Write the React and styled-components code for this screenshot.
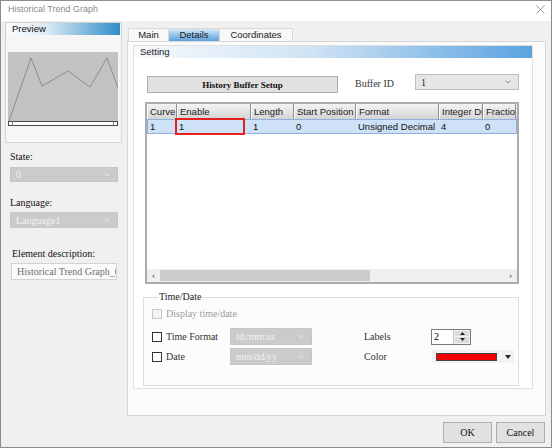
import React from 'react'
import styled, { createGlobalStyle } from 'styled-components'

const SANS = `"Liberation Sans", Arial, sans-serif`
const SERIF = `"Liberation Serif", "Times New Roman", serif`

const GlobalStyle = createGlobalStyle`
  html, body { margin: 0; padding: 0; background: #fff; }
  * { box-sizing: border-box; }
`

const Window = styled.div`
  width: 552px;
  height: 448px;
  display: flex;
  flex-direction: column;
  border: 1px solid #8c8c8c;
  background: #f0f0f0;
  font-family: ${SERIF};
  overflow: hidden;
`

const TitleBar = styled.div`
  height: 20px;
  flex: none;
  display: flex;
  align-items: flex-start;
  justify-content: space-between;
  padding: 3px 6px 0 7px;
  background: #fff;
  font-family: ${SANS};
  font-size: 9px;
  line-height: 10px;
  color: #8a8a8a;
`

const Body = styled.div`
  flex: 1;
  display: flex;
  gap: 3px;
  padding: 1px 5px 0 3px;
  min-height: 0;
`

const LeftCol = styled.div`
  width: 120px;
  flex: none;
  display: flex;
  flex-direction: column;
`

const PreviewBox = styled.div`
  width: 117px;
  height: 121px;
  margin-left: 1px;
  border: 1px solid #d4d4d4;
  background: #f6f6f6;
  display: flex;
  flex-direction: column;
`

const PreviewHead = styled.div`
  height: 12px;
  margin: 0 1px;
  padding-left: 5px;
  background: linear-gradient(to right, #fbfcfd 0%, #dcebf5 35%, #2f8cc8 100%);
  font-family: ${SANS};
  font-size: 9.5px;
  line-height: 12px;
  color: #111;
`

const Graph = styled.div`
  width: 110px;
  height: 69px;
  margin: 17px 0 0 2px;
  background: #c2c2c0;
  svg { display: block; }
`

const GraphScroll = styled.div`
  width: 110px;
  height: 5px;
  margin-left: 2px;
  border: 1px solid #4a4a4a;
  background: #fff;
  display: flex;
  justify-content: space-between;
  span {
    width: 4px;
    border-right: 1px solid #888;
    &:last-child { border-right: none; border-left: 1px solid #888; }
  }
`

const SideLabel = styled.div`
  font-size: 10px;
  line-height: 12px;
  color: #111;
  margin: ${p => p.$top}px 0 0 ${p => p.$left || 6}px;
`

const Combo = styled.div`
  width: ${p => p.$w}px;
  height: ${p => p.$h || 16}px;
  margin: ${p => p.$m || '0'};
  flex: none;
  display: flex;
  align-items: center;
  justify-content: space-between;
  padding: 0 7px 0 5px;
  border: 1px solid ${p => (p.$disabled ? '#c6c6c6' : '#bdbdbd')};
  background: ${p => (p.$disabled ? '#cbcbcb' : '#e6e6e6')};
  color: ${p => (p.$disabled ? '#f2f2f2' : '#222')};
  font-family: ${SERIF};
  font-size: 10px;
  svg { flex: none; }
`

const TextField = styled.div`
  width: 106px;
  height: 17px;
  margin: 3px 0 0 7px;
  padding-left: 5px;
  border: 1px solid #d2d2d2;
  background: #fafafa;
  color: #6e6e6e;
  font-size: 10px;
  line-height: 15px;
  white-space: nowrap;
  overflow: hidden;
`

const RightCol = styled.div`
  flex: 1;
  display: flex;
  flex-direction: column;
  min-width: 0;
`

const TabRow = styled.div`
  height: 19px;
  flex: none;
  display: flex;
  align-items: flex-end;
  padding-left: 2px;
`

const Tab = styled.div`
  width: ${p => p.$w}px;
  height: 13px;
  border: 1px solid #d9d9d9;
  border-bottom: none;
  margin-left: -1px;
  background: ${p =>
    p.$active ? 'linear-gradient(to bottom, #d6e8f6 0%, #8fc0e8 55%, #5fa2dc 100%)' : '#f8f8f8'};
  font-family: ${SANS};
  font-size: 9.5px;
  line-height: 12px;
  text-align: center;
  color: #1a1a1a;
`

const TabPanel = styled.div`
  height: 375px;
  flex: none;
  border: 1px solid #d6d6d6;
  background: #fbfbfb;
  padding: 3px 12px 0 5px;
`

const Group = styled.div`
  height: 344px;
  border: 1px solid #e0e0e0;
  background: #fff;
  display: flex;
  flex-direction: column;
`

const GroupHead = styled.div`
  height: 12px;
  padding-left: 6px;
  background: linear-gradient(to right, #f6f9fc 0%, #cfe3f4 45%, #5aa3e0 100%);
  font-family: ${SANS};
  font-size: 9.5px;
  line-height: 12px;
  color: #222;
`

const SetupRow = styled.div`
  display: flex;
  align-items: flex-start;
  margin: 16px 0 0 13px;
`

const PushButton = styled.div`
  width: ${p => p.$w}px;
  height: ${p => p.$h}px;
  margin-top: ${p => p.$top || 0}px;
  flex: none;
  display: flex;
  align-items: center;
  justify-content: center;
  border: 1px solid #adadad;
  background: #e1e1e1;
  font-family: ${SERIF};
  font-size: ${p => p.$fs || 10}px;
  font-weight: ${p => p.$bold ? 600 : 400};
  color: #111;
`

const InlineLabel = styled.div`
  width: ${p => p.$w}px;
  flex: none;
  margin-left: ${p => p.$ml || 0}px;
  font-size: 10px;
  line-height: 16px;
  color: ${p => (p.$muted ? '#9c9c9c' : '#333')};
`

const Table = styled.div`
  width: 374px;
  height: 182px;
  margin: 9px 0 0 11px;
  border: 2px solid #ababab;
  background: #fff;
  display: flex;
  flex-direction: column;
  font-family: ${SANS};
  font-size: 9.5px;
`

const HeadRow = styled.div`
  height: 15px;
  flex: none;
  display: flex;
  background: linear-gradient(to bottom, #f4f4f4, #d4d4d4);
`

const HeadCell = styled.div`
  width: ${p => p.$w}px;
  flex: none;
  padding-left: 3px;
  border-right: 1px solid #8e8e8e;
  box-shadow: inset 1px 0 0 #fdfdfd;
  line-height: 15px;
  color: #222;
  white-space: nowrap;
  overflow: hidden;
`

const DataRow = styled.div`
  height: 15px;
  flex: none;
  display: flex;
  background: #cfe1f6;
  border: 1px solid #8cb1df;
`

const DataCell = styled.div`
  position: relative;
  width: ${p => p.$w}px;
  flex: none;
  padding-left: 2px;
  line-height: 13px;
  color: #111;
  white-space: nowrap;
`

const EditMark = styled.div`
  position: absolute;
  left: -2px;
  top: -2px;
  bottom: -2px;
  width: 70px;
  border: 2px solid #e2221c;
`

const TableSpace = styled.div`
  flex: 1;
`

const HScroll = styled.div`
  height: 13px;
  flex: none;
  display: flex;
  align-items: stretch;
  background: #efefef;
  font-size: 9px;
  color: #444;
`

const ScrollArrow = styled.div`
  width: 13px;
  flex: none;
  display: flex;
  align-items: center;
  justify-content: center;
`

const ScrollThumb = styled.div`
  width: 210px;
  margin: 1px 0;
  background: #cbcbcb;
`

const TimeBox = styled.fieldset`
  width: 376px;
  height: 94px;
  margin: 8px 0 0 9px;
  padding: 0 0 0 8px;
  border: 1px solid #dedede;
  background: #fcfcfc;
  min-width: 0;
  legend {
    margin-left: 6px;
    padding: 0 1px;
    font-size: 10px;
    line-height: 10px;
    color: #222;
  }
`

const OptRow = styled.div`
  display: flex;
  align-items: center;
  height: ${p => p.$h}px;
  margin-top: ${p => p.$top}px;
`

const Check = styled.div`
  width: 10px;
  height: 10px;
  flex: none;
  margin-right: 4px;
  border: 1px solid ${p => (p.$disabled ? '#c8c8c8' : '#333')};
  background: ${p => (p.$disabled ? '#f4f4f4' : '#fff')};
`

const Spinner = styled.div`
  width: 40px;
  height: 16px;
  flex: none;
  display: flex;
  border: 1px solid #7a7a7a;
  background: #fff;
  font-size: 10px;
  line-height: 14px;
  span { flex: 1; padding-left: 2px; }
`

const SpinButtons = styled.div`
  width: 17px;
  display: flex;
  flex-direction: column;
  gap: 1px;
  padding: 1px;
  background: #f3f3f3;
  border-left: 1px solid #c4c4c4;
  div {
    flex: 1;
    background: #dcdcdc;
    display: flex;
    align-items: center;
    justify-content: center;
  }
`

const ColorPick = styled.div`
  width: 82px;
  height: 13px;
  flex: none;
  margin-left: 1px;
  display: flex;
  align-items: center;
  padding-left: 4px;
  background: #f2f2f2;
`

const Swatch = styled.div`
  width: 61px;
  height: 8px;
  background: #f50000;
  border: 1px solid #444;
`

const ButtonRow = styled.div`
  flex: 1;
  display: flex;
  justify-content: flex-end;
  gap: 4px;
  padding: 6px 1px 0 0;
`

const Chevron = ({ color = '#8a8a8a' }) => (
  <svg width="6" height="4" viewBox="0 0 6 4">
    <polyline points="0.5,0.5 3,3 5.5,0.5" fill="none" stroke={color} strokeWidth="1" />
  </svg>
)

const Tri = ({ up }) => (
  <svg width="5" height="3" viewBox="0 0 5 3">
    <polygon points={up ? '0,3 5,3 2.5,0' : '0,0 5,0 2.5,3'} fill="#222" />
  </svg>
)

const columns = [
  ['Curve', 30, '1'],
  ['Enable', 74, '1'],
  ['Length', 43, '1'],
  ['Start Position', 62, '0'],
  ['Format', 83, 'Unsigned Decimal'],
  ['Integer Digits', 44, '4'],
  ['Fraction Digits', 33, '0'],
]

export default function App() {
  return (
    <>
      <GlobalStyle />
      <Window>
        <TitleBar>
          <span>Historical Trend Graph</span>
          <svg width="9" height="9" viewBox="0 0 9 9" style={{ marginTop: 1 }}>
            <path d="M0.5 0.5 L8.5 8.5 M8.5 0.5 L0.5 8.5" stroke="#9a9a9a" strokeWidth="1" />
          </svg>
        </TitleBar>
        <Body>
          <LeftCol>
            <PreviewBox>
              <PreviewHead>Preview</PreviewHead>
              <Graph>
                <svg width="110" height="69" viewBox="0 0 110 69">
                  <polyline
                    points="1,69 23,6 34,34 60,19 82,35 99,6 110,36"
                    fill="none"
                    stroke="#8c8c8c"
                    strokeWidth="1"
                  />
                </svg>
              </Graph>
              <GraphScroll>
                <span />
                <span />
              </GraphScroll>
            </PreviewBox>
            <SideLabel $top={8}>State:</SideLabel>
            <Combo $w={108} $h={15} $m="4px 0 0 6px" $disabled>
              <span>0</span>
              <Chevron color="#e6e6e6" />
            </Combo>
            <SideLabel $top={15}>Language:</SideLabel>
            <Combo $w={108} $m="3px 0 0 6px" $disabled>
              <span>Language1</span>
              <Chevron color="#e6e6e6" />
            </Combo>
            <SideLabel $top={20} $left={8}>Element description:</SideLabel>
            <TextField>Historical Trend Graph_002</TextField>
          </LeftCol>
          <RightCol>
            <TabRow>
              <Tab $w={41}>Main</Tab>
              <Tab $w={52} $active>Details</Tab>
              <Tab $w={74}>Coordinates</Tab>
            </TabRow>
            <TabPanel>
              <Group>
                <GroupHead>Setting</GroupHead>
                <SetupRow>
                  <PushButton $w={191} $h={17} $top={2} $fs={9} $bold>
                    History Buffer Setup
                  </PushButton>
                  <InlineLabel $w={60} $ml={17} style={{ marginTop: 2 }}>
                    Buffer ID
                  </InlineLabel>
                  <Combo $w={104} $m="0">
                    <span>1</span>
                    <Chevron />
                  </Combo>
                </SetupRow>
                <Table>
                  <HeadRow>
                    {columns.map(([name, w]) => (
                      <HeadCell key={name} $w={w}>{name}</HeadCell>
                    ))}
                  </HeadRow>
                  <DataRow>
                    {columns.map(([name, w, v], i) => (
                      <DataCell key={name} $w={i === 0 ? w - 1 : w}>
                        {v}
                        {name === 'Enable' && <EditMark />}
                      </DataCell>
                    ))}
                  </DataRow>
                  <TableSpace />
                  <HScroll>
                    <ScrollArrow>&lsaquo;</ScrollArrow>
                    <ScrollThumb />
                    <TableSpace />
                    <ScrollArrow>&rsaquo;</ScrollArrow>
                  </HScroll>
                </Table>
                <TimeBox>
                  <legend>Time/Date</legend>
                  <OptRow $h={12} $top={6}>
                    <Check $disabled />
                    <InlineLabel $w={120} $muted>Display time/date</InlineLabel>
                  </OptRow>
                  <OptRow $h={17} $top={8}>
                    <Check />
                    <InlineLabel $w={64}>Time Format</InlineLabel>
                    <Combo $w={82} $h={17} $disabled>
                      <span>hh:mm:ss</span>
                      <Chevron color="#e6e6e6" />
                    </Combo>
                    <InlineLabel $w={67} $ml={52}>Labels</InlineLabel>
                    <Spinner>
                      <span>2</span>
                      <SpinButtons>
                        <div><Tri up /></div>
                        <div><Tri /></div>
                      </SpinButtons>
                    </Spinner>
                  </OptRow>
                  <OptRow $h={17} $top={3}>
                    <Check />
                    <InlineLabel $w={64}>Date</InlineLabel>
                    <Combo $w={82} $h={17} $disabled>
                      <span>mm/dd/yy</span>
                      <Chevron color="#e6e6e6" />
                    </Combo>
                    <InlineLabel $w={67} $ml={52}>Color</InlineLabel>
                    <ColorPick>
                      <Swatch />
                      <svg width="6" height="4" viewBox="0 0 6 4" style={{ marginLeft: 8 }}>
                        <polygon points="0,0 6,0 3,4" fill="#222" />
                      </svg>
                    </ColorPick>
                  </OptRow>
                </TimeBox>
              </Group>
            </TabPanel>
            <ButtonRow>
              <PushButton $w={49} $h={21}>OK</PushButton>
              <PushButton $w={49} $h={21}>Cancel</PushButton>
            </ButtonRow>
          </RightCol>
        </Body>
      </Window>
    </>
  )
}
